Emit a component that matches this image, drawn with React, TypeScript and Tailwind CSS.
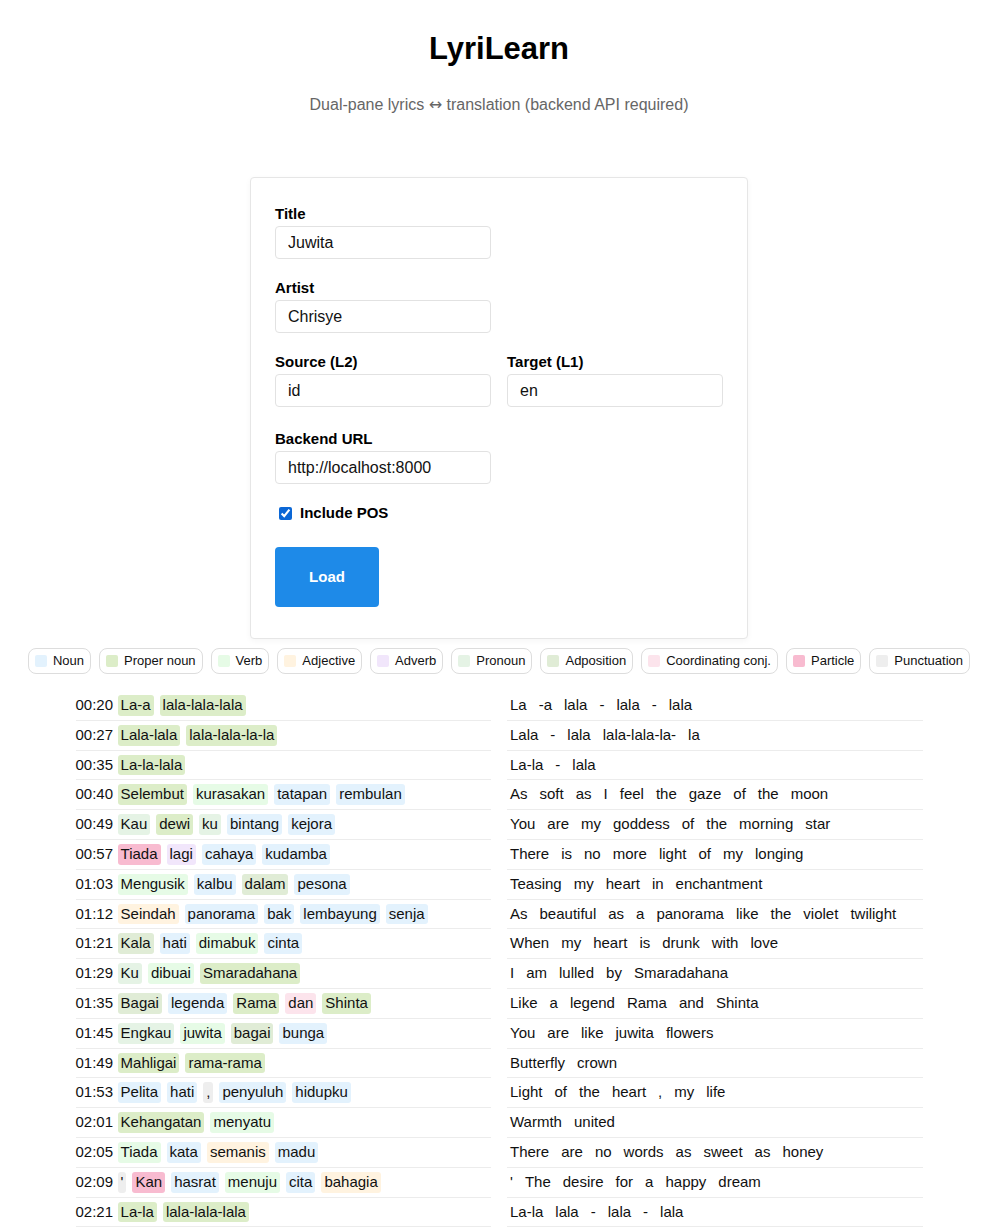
import React from "react";

type Pos = "NOUN" | "PROPN" | "VERB" | "ADJ" | "ADV" | "PRON" | "ADP" | "CCONJ" | "PART" | "PUNCT";

const posColors: Record<Pos, string> = {
  NOUN: "bg-[#e3f2fd]",
  PROPN: "bg-[#dcedc8]",
  VERB: "bg-[#e6fbe6]",
  ADJ: "bg-[#fff3e0]",
  ADV: "bg-[#f1e6fb]",
  PRON: "bg-[#e5f3e5]",
  ADP: "bg-[#e0ecd6]",
  CCONJ: "bg-[#fce4ec]",
  PART: "bg-[#f8bbd0]",
  PUNCT: "bg-[#eeeeee]",
};

const legend: { label: string; pos: Pos }[] = [
  { label: "Noun", pos: "NOUN" },
  { label: "Proper noun", pos: "PROPN" },
  { label: "Verb", pos: "VERB" },
  { label: "Adjective", pos: "ADJ" },
  { label: "Adverb", pos: "ADV" },
  { label: "Pronoun", pos: "PRON" },
  { label: "Adposition", pos: "ADP" },
  { label: "Coordinating conj.", pos: "CCONJ" },
  { label: "Particle", pos: "PART" },
  { label: "Punctuation", pos: "PUNCT" },
];

// "word/POS" pairs, translation words split on spaces
const lines: { time: string; src: string; tgt: string }[] = [
  { time: "00:20", src: "La-a/PROPN lala-lala-lala/PROPN", tgt: "La -a lala - lala - lala" },
  { time: "00:27", src: "Lala-lala/PROPN lala-lala-la-la/PROPN", tgt: "Lala - lala lala-lala-la- la" },
  { time: "00:35", src: "La-la-lala/PROPN", tgt: "La-la - lala" },
  { time: "00:40", src: "Selembut/PROPN kurasakan/VERB tatapan/NOUN rembulan/NOUN", tgt: "As soft as I feel the gaze of the moon" },
  { time: "00:49", src: "Kau/PRON dewi/PROPN ku/PRON bintang/NOUN kejora/NOUN", tgt: "You are my goddess of the morning star" },
  { time: "00:57", src: "Tiada/PART lagi/ADV cahaya/NOUN kudamba/NOUN", tgt: "There is no more light of my longing" },
  { time: "01:03", src: "Mengusik/VERB kalbu/NOUN dalam/ADP pesona/NOUN", tgt: "Teasing my heart in enchantment" },
  { time: "01:12", src: "Seindah/ADJ panorama/NOUN bak/NOUN lembayung/NOUN senja/NOUN", tgt: "As beautiful as a panorama like the violet twilight" },
  { time: "01:21", src: "Kala/ADP hati/NOUN dimabuk/VERB cinta/NOUN", tgt: "When my heart is drunk with love" },
  { time: "01:29", src: "Ku/PRON dibuai/VERB Smaradahana/PROPN", tgt: "I am lulled by Smaradahana" },
  { time: "01:35", src: "Bagai/ADP legenda/NOUN Rama/PROPN dan/CCONJ Shinta/PROPN", tgt: "Like a legend Rama and Shinta" },
  { time: "01:45", src: "Engkau/PRON juwita/VERB bagai/ADP bunga/NOUN", tgt: "You are like juwita flowers" },
  { time: "01:49", src: "Mahligai/PROPN rama-rama/PROPN", tgt: "Butterfly crown" },
  { time: "01:53", src: "Pelita/NOUN hati/NOUN ,/PUNCT penyuluh/NOUN hidupku/NOUN", tgt: "Light of the heart , my life" },
  { time: "02:01", src: "Kehangatan/PROPN menyatu/VERB", tgt: "Warmth united" },
  { time: "02:05", src: "Tiada/VERB kata/NOUN semanis/ADJ madu/NOUN", tgt: "There are no words as sweet as honey" },
  { time: "02:09", src: "'/PUNCT Kan/PART hasrat/NOUN menuju/VERB cita/NOUN bahagia/ADJ", tgt: "' The desire for a happy dream" },
  { time: "02:21", src: "La-la/PROPN lala-lala-lala/PROPN", tgt: "La-la lala - lala - lala" },
];

const Field = ({ label, value, className = "" }: { label: string; value: string; className?: string }) => (
  <div className={className}>
    <label className="block text-[15px] font-bold leading-5 text-black">{label}</label>
    <input
      defaultValue={value}
      className="mt-[2px] h-[33px] w-[216px] rounded-[4px] border border-[#e2e2e2] bg-white pl-3 text-[16px] text-[#111] outline-none"
    />
  </div>
);

const App = () => {
  return (
    <div className="w-[998px] bg-white pt-[30px] font-['Liberation_Sans',Arial,sans-serif] text-[#111]">
      <h1 className="text-center text-[31px] font-bold leading-[38px] text-black">LyriLearn</h1>
      <p className="mt-[25px] text-center text-[16px] leading-6 text-[#666]">
        Dual-pane lyrics <span className="font-['DejaVu_Sans',sans-serif] text-[16px]">↔</span> translation (backend API required)
      </p>

      <div className="mx-auto mt-[60px] w-[498px] rounded-[4px] border border-[#e6e6e6] bg-white px-6 pb-[31px] pt-[26px] shadow-[0_2px_6px_rgba(0,0,0,0.04)]">
        <Field label="Title" value="Juwita" />
        <Field label="Artist" value="Chrisye" className="mt-[19px]" />
        <div className="mt-[19px] grid grid-cols-2 gap-x-4">
          <Field label="Source (L2)" value="id" />
          <Field label="Target (L1)" value="en" />
        </div>
        <Field label="Backend URL" value="http://localhost:8000" className="mt-[22px]" />
        <label className="mt-[19px] flex items-center gap-2 text-[15px] font-bold leading-5 text-black">
          <input type="checkbox" defaultChecked className="ml-1 h-[13px] w-[13px] accent-[#0b67d6]" />
          Include POS
        </label>
        <button className="mt-6 h-[60px] w-[104px] rounded-[4px] bg-[#1e8ae8] text-[15px] font-bold text-white">
          Load
        </button>
      </div>

      <div className="mt-[9px] flex flex-wrap justify-center gap-2">
        {legend.map((l) => (
          <div
            key={l.label}
            className="flex items-center gap-1.5 rounded-lg border border-[#dddddd] py-1 px-1.5 text-[13px] leading-4 text-[#111]"
          >
            <span className={`h-3 w-3 rounded-[2px] ${posColors[l.pos]}`} />
            {l.label}
          </div>
        ))}
      </div>

      <div className="mx-auto mt-[17px] w-[847px]">
        {lines.map((line) => (
          <div key={line.time} className="grid grid-cols-2 gap-x-4">
            <div className="flex flex-wrap items-center gap-[6px] border-b border-[#ececec] py-1 text-[15px]">
              <span className="mr-[-1.5px] leading-[20.8px]">{line.time}</span>
              {line.src.split(" ").map((t, i) => {
                const [w, p] = t.split("/");
                return (
                  <span key={i} className={`rounded-[3px] px-[3px] leading-[20.8px] ${posColors[p as Pos]}`}>
                    {w}
                  </span>
                );
              })}
            </div>
            <div className="flex flex-wrap items-center gap-[6px] border-b border-[#ececec] py-1 text-[15px]">
              {line.tgt.split(" ").map((w, i) => (
                <span key={i} className="px-[3px] leading-[20.8px]">
                  {w}
                </span>
              ))}
            </div>
          </div>
        ))}
      </div>
    </div>
  );
};

export default App;
